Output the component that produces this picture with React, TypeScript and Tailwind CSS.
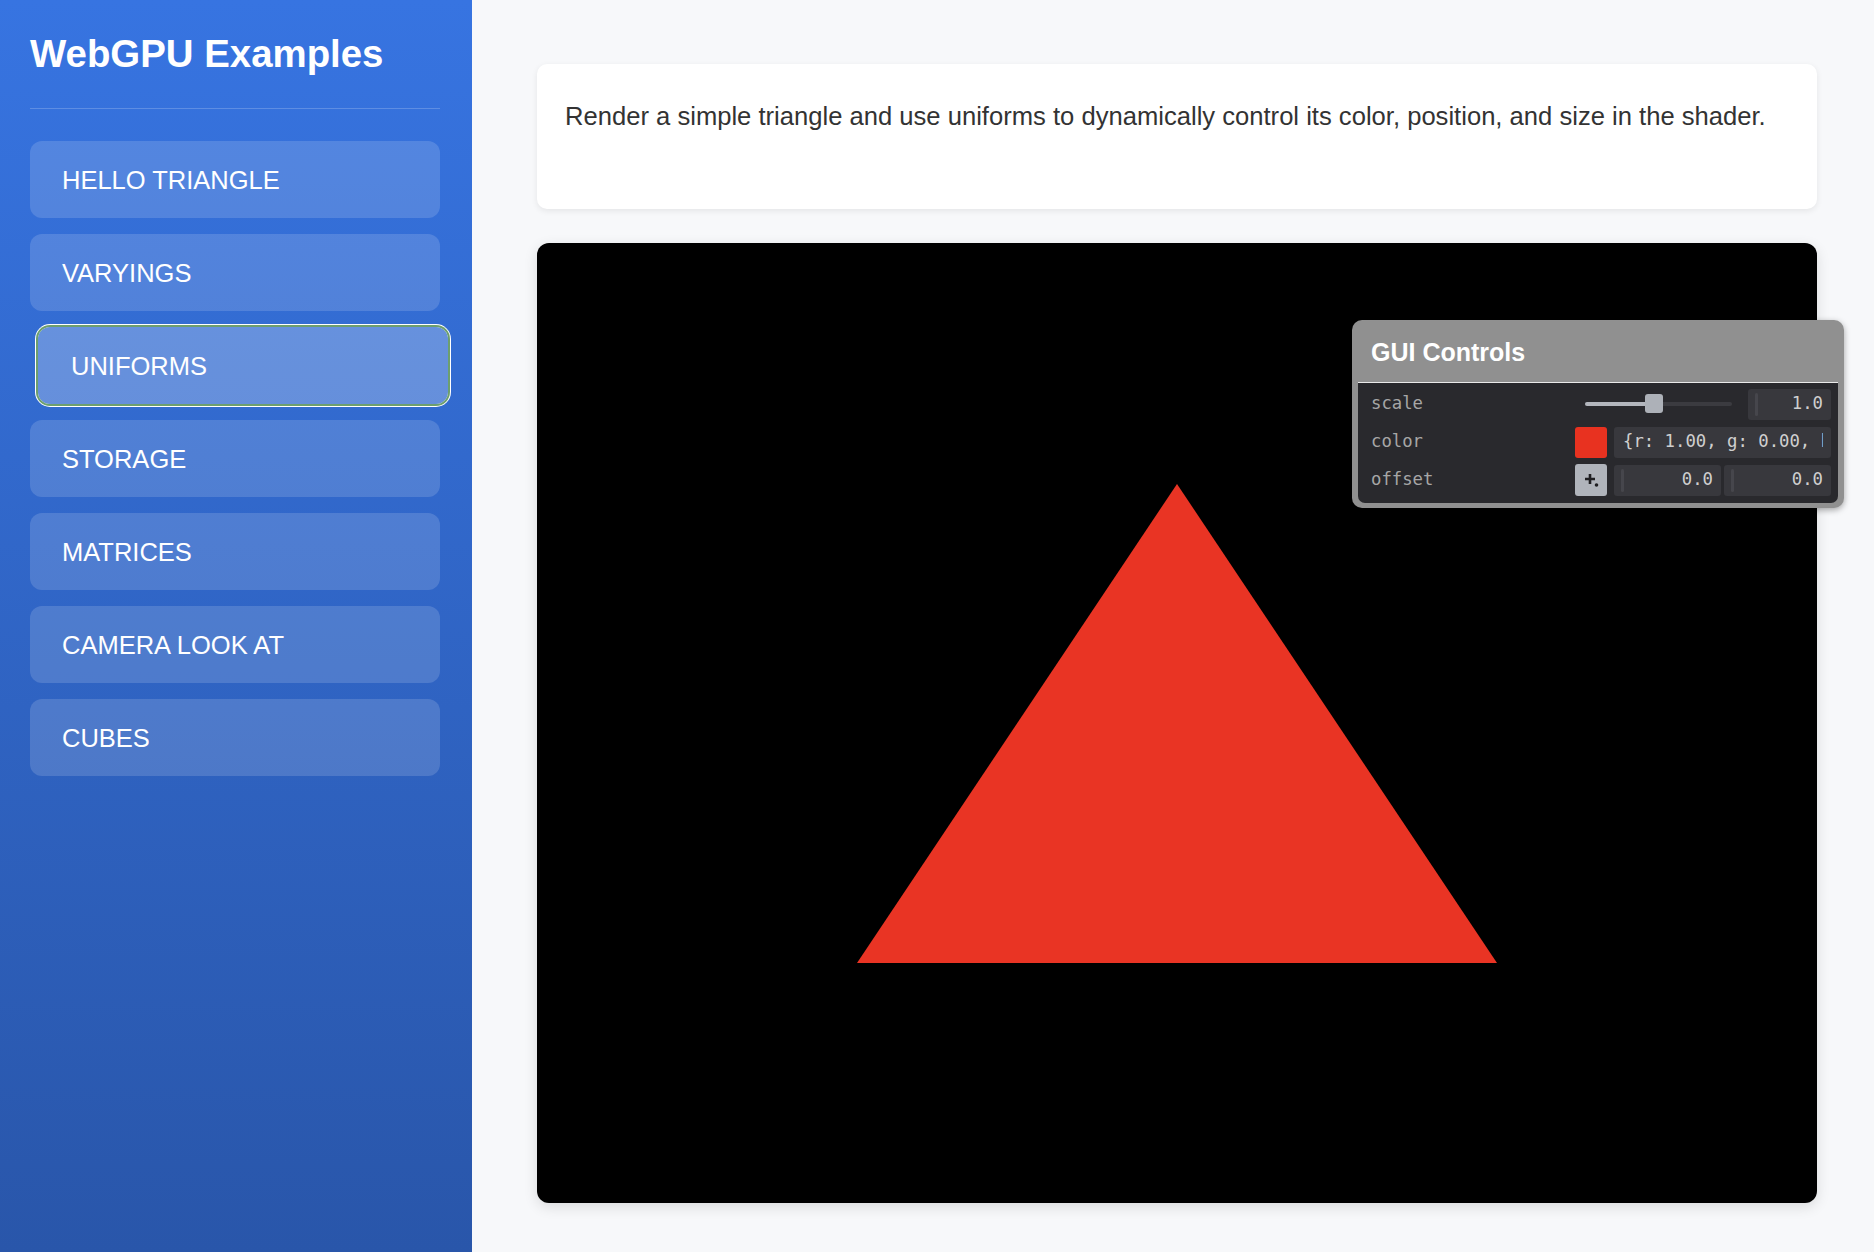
import React from 'react';

const examples = ['HELLO TRIANGLE', 'VARYINGS', 'UNIFORMS', 'STORAGE', 'MATRICES', 'CAMERA LOOK AT', 'CUBES'];

function NumberBox({ value, className }: { value: string; className: string }) {
  return (
    <div className={`relative flex h-[31px] items-center justify-end rounded-[3px] bg-[#38383d] pr-[8px] ${className}`}>
      <span className="absolute left-[7px] top-[4px] h-[23px] w-[3px] rounded-[2px] bg-[#46464c]" />
      <span>{value}</span>
    </div>
  );
}

function GuiPanel() {
  return (
    <div className="absolute left-[815px] top-[77px] w-[492px] rounded-[10px] bg-[#909090] px-[6px] pb-[5px] shadow-[0_2px_6px_rgba(0,0,0,0.35)]">
      <div className="flex h-[62px] items-center pl-[13px] pt-[3px] text-[25px] font-bold leading-none text-white">GUI Controls</div>
      <div className="rounded-b-[7px] border-t border-white/90 bg-[#29292d] pb-[4px] pt-[2px] font-['DejaVu_Sans_Mono',monospace] text-[17.3px] leading-none text-[#cfcfcf]">
        {/* scale */}
        <div className="flex h-[38px] items-center pl-[13px] pr-[7px]">
          <span className="w-[204px] text-[#a6a6a6]">scale</span>
          <div className="relative ml-[10px] h-[4px] w-[147px] rounded-full bg-[#3b3b40]">
            <div className="h-full w-[69px] rounded-full bg-[#b3b6bd]" />
            <div className="absolute left-[60px] top-[-8px] h-[19px] w-[18px] rounded-[3px] bg-[#adb1b8]" />
          </div>
          <NumberBox value="1.0" className="ml-auto w-[83px]" />
        </div>
        {/* color */}
        <div className="flex h-[38px] items-center pl-[13px] pr-[7px]">
          <span className="w-[204px] text-[#a6a6a6]">color</span>
          <div className="h-[31px] w-[32px] rounded-[3px] bg-[#e83220]" />
          <div className="ml-[7px] flex h-[31px] w-[217px] items-center rounded-[3px] bg-[#38383d] pl-[9px] pr-[8px]">
            <div className="overflow-hidden whitespace-pre">{'{r: 1.00, g: 0.00, b: 0.00}'}</div>
          </div>
        </div>
        {/* offset */}
        <div className="flex h-[38px] items-center pl-[13px] pr-[7px]">
          <span className="w-[204px] text-[#a6a6a6]">offset</span>
          <div className="flex h-[32px] w-[32px] items-center justify-center rounded-[3px] bg-[#b0b4bb]">
            <svg width="20" height="20" viewBox="0 0 20 20">
              <path d="M9 4v10M4 9h10" stroke="#1f1f22" strokeWidth="2.6" fill="none" />
              <circle cx="15.5" cy="15" r="1.8" fill="#1f1f22" />
            </svg>
          </div>
          <NumberBox value="0.0" className="ml-[7px] w-[107px]" />
          <NumberBox value="0.0" className="ml-[3px] w-[107px]" />
        </div>
      </div>
    </div>
  );
}

export default function App() {
  const active = 'UNIFORMS';
  return (
    <div className="flex h-screen w-full overflow-hidden bg-[#f7f8fa] font-['Liberation_Sans',Arial,sans-serif]">
      <aside className="w-[472px] shrink-0 bg-[linear-gradient(to_bottom,#3774e1,#2956aa)] pl-[30px] pr-[32px] pt-[35px]">
        <h1 className="text-[38.4px] font-bold leading-none text-white">WebGPU Examples</h1>
        <div className="mt-[35px] h-px bg-white/20" />
        <nav className="mt-[32px] flex flex-col gap-[16px]">
          {examples.map((name) =>
            name === active ? (
              <div
                key={name}
                className="flex h-[77px] translate-x-[8px] items-center rounded-[12px] bg-white/25 pl-[33px] text-[25.5px] text-white shadow-[0_0_0_2px_#6d9f6f,0_0_0_3px_#ffffff]"
              >
                {name}
              </div>
            ) : (
              <div key={name} className="flex h-[77px] items-center rounded-[12px] bg-white/15 pl-[32px] text-[25.5px] text-white">
                {name}
              </div>
            )
          )}
        </nav>
      </aside>

      <main className="flex-1 pl-[65px] pt-[64px]">
        <div className="w-[1280px]">
          <div className="h-[145px] rounded-[10px] bg-white px-[28px] pt-[32px] shadow-[0_2px_6px_rgba(0,0,0,0.08)]">
            <p className="text-[25.6px] leading-[1.6] text-[#333]">
              Render a simple triangle and use uniforms to dynamically control its color, position, and size in the shader.
            </p>
          </div>

          <div className="relative mt-[34px] h-[960px] w-[1280px] rounded-[12px] bg-black shadow-[0_4px_14px_rgba(0,0,0,0.12)]">
            <svg width="1280" height="960" viewBox="0 0 1280 960" className="block">
              <polygon points="640,241 320,720 960,720" fill="#e93424" />
            </svg>
            <GuiPanel />
          </div>
        </div>
      </main>
    </div>
  );
}
